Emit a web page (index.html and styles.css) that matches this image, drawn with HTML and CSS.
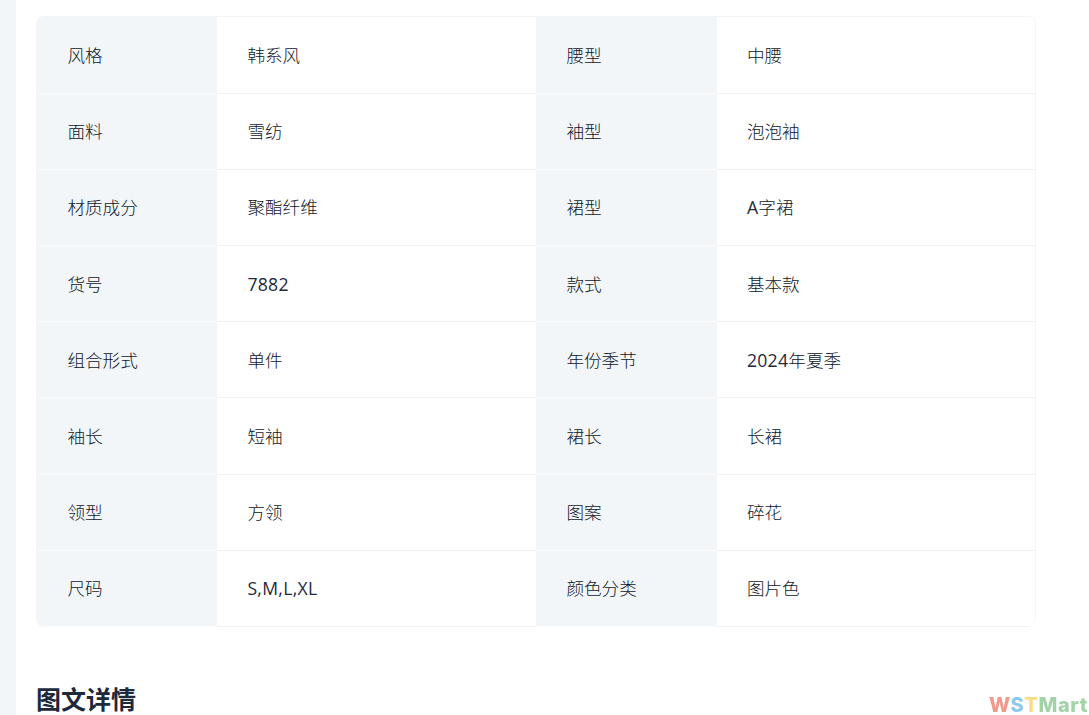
FILE: index.html
```html
<!DOCTYPE html>
<html lang="zh-CN">
<head>
<meta charset="utf-8">
<title>商品详情</title>
<link rel="stylesheet" href="styles.css">
</head>
<body>
<div class="page">
  <aside class="rail"></aside>
  <main class="main">
    <div class="specs">
      <div class="row"><div class="k">风格</div><div class="v">韩系风</div><div class="k">腰型</div><div class="v">中腰</div></div>
      <div class="row"><div class="k">面料</div><div class="v">雪纺</div><div class="k">袖型</div><div class="v">泡泡袖</div></div>
      <div class="row"><div class="k">材质成分</div><div class="v">聚酯纤维</div><div class="k">裙型</div><div class="v"><span><span class="latin">A</span>字裙</span></div></div>
      <div class="row"><div class="k">货号</div><div class="v"><span class="latin">7882</span></div><div class="k">款式</div><div class="v">基本款</div></div>
      <div class="row"><div class="k">组合形式</div><div class="v">单件</div><div class="k">年份季节</div><div class="v"><span><span class="latin">2024</span>年夏季</span></div></div>
      <div class="row"><div class="k">袖长</div><div class="v">短袖</div><div class="k">裙长</div><div class="v">长裙</div></div>
      <div class="row"><div class="k">领型</div><div class="v">方领</div><div class="k">图案</div><div class="v">碎花</div></div>
      <div class="row"><div class="k">尺码</div><div class="v"><span class="latin">S,M,L,XL</span></div><div class="k">颜色分类</div><div class="v">图片色</div></div>
    </div>
    <h2 class="title">图文详情</h2>
  </main>
</div>
<div class="mark"><span class="r">W</span><span class="b">S</span><span class="y">T</span><span class="g">Mart</span></div>
</body>
</html>
```
FILE: styles.css
```css
* { box-sizing: border-box; }
html, body { margin: 0; height: 715px; overflow: hidden; background: #fff; }
body { font-family: "Open Sans", "Noto Sans CJK SC", sans-serif; color: #0f172a; position: relative; }
.page { display: flex; height: 715px; overflow: hidden; }
.rail { width: 16px; flex: none; background: #f2f6f9; }
.main { flex: 1; padding: 16px 0 0 20px; }
.specs { width: 1000px; border: 1px solid #f1f5f9; border-bottom: 0; border-radius: 8px; overflow: hidden; }
.row { display: grid; grid-template-columns: 180px 319px 180.5px 1fr; height: 76.16px; }
.row:first-child { height: 76.86px; }
.k, .v { display: flex; align-items: center; padding: 0 30px .5px 30.4px; font-size: 17.6px; line-height: 28px; white-space: nowrap; font-weight: 300; }
.latin { font-weight: 400; letter-spacing: .3px; color: #1e293b; }
.k { background: #f2f6f9; border-bottom: 1px solid #f9fbfc; }
.v { background: #fff; border-bottom: 1px solid #f0f3f6; }
.title { margin: 51px 0 0; font-family: "Noto Sans CJK SC", sans-serif; font-size: 25px; line-height: 40px; font-weight: 700; color: #1e293b; }
.mark { position: absolute; right: 1px; bottom: -3px; font-family: "Inter", "Liberation Sans", sans-serif; font-weight: 800; font-size: 20px; line-height: 26px; letter-spacing: .6px; opacity: .55; filter: blur(.4px); }
.r { color: #e8452f; }
.b { color: #2f9fe0; }
.y { color: #f5c020; }
.g { color: #55b060; }
```
